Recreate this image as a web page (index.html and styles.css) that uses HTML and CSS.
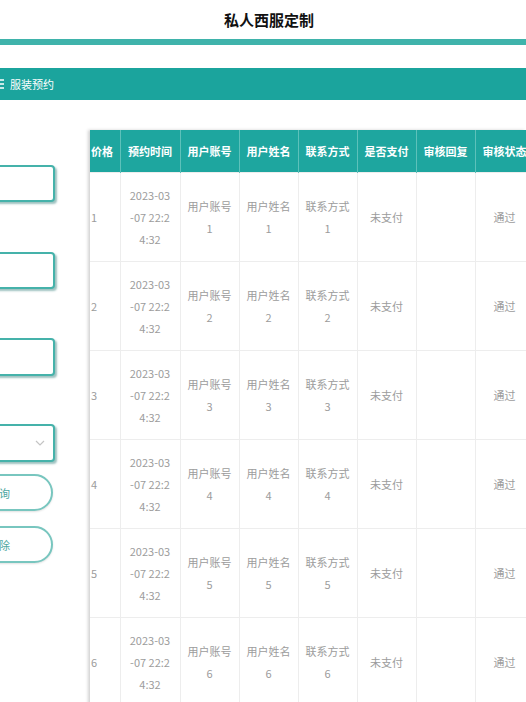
FILE: index.html
```html
<!DOCTYPE html>
<html lang="zh-CN">
<head>
<meta charset="utf-8">
<title>私人西服定制</title>
<link rel="stylesheet" href="styles.css">
</head>
<body>
<header class="top">
  <h1 class="title">私人西服定制</h1>
  <div class="rule"></div>
</header>
<nav class="nav">
  <svg class="nav-icon" width="10" height="12" viewBox="0 0 10 12"><path d="M0 2h10M0 6h10M0 10h10" stroke="#fff" stroke-width="1.3" fill="none"/></svg>
  <span class="nav-text">服装预约</span>
</nav>
<main class="main">
  <aside class="filters">
    <div class="field f1"></div>
    <div class="field f2"></div>
    <div class="field f3"></div>
    <div class="field select">
      <svg width="10" height="6" viewBox="0 0 10 6"><path d="M1 1l4 4 4-4" stroke="#c4c4c4" stroke-width="1.2" fill="none"/></svg>
    </div>
    <button class="btn b1">查询</button>
    <button class="btn b2">删除</button>
  </aside>
  <section class="table-wrap">
    <table class="grid">
      <colgroup>
        <col class="c-price"><col class="c-time"><col class="c-std"><col class="c-std"><col class="c-std"><col class="c-std"><col class="c-std"><col class="c-std">
      </colgroup>
      <thead>
        <tr><th class="price">价格</th><th>预约时间</th><th>用户账号</th><th>用户姓名</th><th>联系方式</th><th>是否支付</th><th>审核回复</th><th>审核状态</th></tr>
      </thead>
      <tbody>
        <tr><td class="price">1</td><td class="time">2023-03-07 22:24:32</td><td>用户账号1</td><td>用户姓名1</td><td>联系方式1</td><td>未支付</td><td></td><td>通过</td></tr>
        <tr><td class="price">2</td><td class="time">2023-03-07 22:24:32</td><td>用户账号2</td><td>用户姓名2</td><td>联系方式2</td><td>未支付</td><td></td><td>通过</td></tr>
        <tr><td class="price">3</td><td class="time">2023-03-07 22:24:32</td><td>用户账号3</td><td>用户姓名3</td><td>联系方式3</td><td>未支付</td><td></td><td>通过</td></tr>
        <tr><td class="price">4</td><td class="time">2023-03-07 22:24:32</td><td>用户账号4</td><td>用户姓名4</td><td>联系方式4</td><td>未支付</td><td></td><td>通过</td></tr>
        <tr><td class="price">5</td><td class="time">2023-03-07 22:24:32</td><td>用户账号5</td><td>用户姓名5</td><td>联系方式5</td><td>未支付</td><td></td><td>通过</td></tr>
        <tr><td class="price">6</td><td class="time">2023-03-07 22:24:32</td><td>用户账号6</td><td>用户姓名6</td><td>联系方式6</td><td>未支付</td><td></td><td>通过</td></tr>
      </tbody>
    </table>
  </section>
</main>
</body>
</html>
```
FILE: styles.css
```css
html, body {
  margin: 0;
  padding: 0;
}
body {
  width: 526px;
  height: 702px;
  overflow: hidden;
  background: #fff;
  font-family: "Noto Sans CJK SC", "Noto Sans", sans-serif;
}
.top {
  padding-top: 10px;
}
.title {
  margin: 0;
  padding-left: 12px;
  text-align: center;
  font-size: 15px;
  line-height: 20px;
  font-weight: 700;
  color: #111;
}
.rule {
  margin-top: 9px;
  height: 6px;
  background: #3fb3ab;
}
.nav {
  margin-top: 23px;
  height: 32px;
  background: #1ba49d;
  display: flex;
  align-items: center;
  gap: 6px;
}
.nav-icon {
  margin-left: -6px;
  flex: none;
}
.nav-text {
  color: #fff;
  font-size: 11px;
}
.main {
  display: flex;
  align-items: flex-start;
}
.filters {
  width: 90px;
  flex: none;
  display: flex;
  flex-direction: column;
}
.field {
  margin-left: -100px;
  width: 155px;
  height: 37px;
  box-sizing: border-box;
  border: 2px solid #45b2aa;
  border-radius: 4px;
  background: #fff;
  box-shadow: 2px 2px 2px rgba(40, 120, 115, 0.45);
}
.f1 { margin-top: 65px; }
.f2 { margin-top: 50px; }
.f3 { margin-top: 49px; height: 38px; }
.select {
  margin-top: 48px;
  height: 38px;
  display: flex;
  align-items: center;
  justify-content: flex-end;
  padding-right: 8px;
}
.btn {
  margin-left: -100px;
  width: 153px;
  height: 37px;
  box-sizing: border-box;
  border: 2px solid #78c6bf;
  border-radius: 19px;
  background: #fff;
  box-shadow: 0 1px 2px rgba(0, 0, 0, 0.12);
  text-align: right;
  padding: 0 41px 0 0;
  font-family: inherit;
  font-size: 11px;
  color: #4ea79f;
}
.b1 { margin-top: 12px; }
.b2 { margin-top: 15px; }
.table-wrap {
  margin-top: 30px;
  flex: 1;
  min-width: 0;
  overflow: hidden;
  box-shadow: -2px 0 3px rgba(0, 0, 0, 0.18);
}
.grid {
  border-collapse: collapse;
  table-layout: fixed;
  width: 444px;
}
.c-price { width: 30px; }
.c-time { width: 60px; }
.c-std { width: 59px; }
.grid th {
  height: 42px;
  padding: 0 4px;
  background: #1ea69f;
  color: #fff;
  font-size: 11px;
  font-weight: 700;
  text-align: center;
  border-right: 1px solid #5dc1ba;
  white-space: nowrap;
  overflow: hidden;
}
.grid td {
  height: 88px;
  padding: 0 5px;
  border: 1px solid #ededed;
  color: #9c9c9c;
  font-size: 11px;
  line-height: 22px;
  text-align: center;
  vertical-align: middle;
  word-break: break-all;
}
.grid th.price {
  text-align: left;
  padding: 0 0 0 1px;
}
.grid td.price {
  text-align: left;
  padding: 0 0 0 1px;
  border-left: none;
}
.grid td.time {
  padding: 0 8px;
}
```
